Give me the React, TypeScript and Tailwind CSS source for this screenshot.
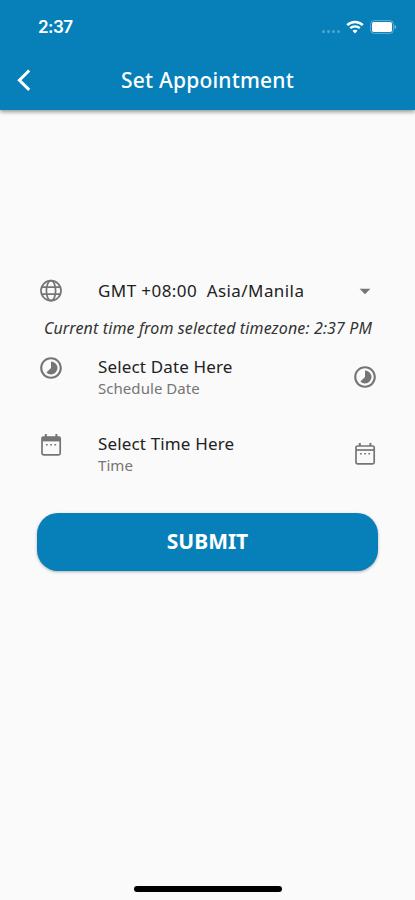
import React from "react";
import { MdArrowDropDown, MdTimelapse } from "react-icons/md";

interface PickerRowProps {
  title: string;
  subtitle: string;
  leading: React.ReactNode;
  trailing: React.ReactNode;
}

const GlobeIcon: React.FC = () => (
  <svg className="mr-[34px]" width="26" height="26" viewBox="0 0 26 26" fill="none" stroke="currentColor" strokeWidth="1.7">
    <circle cx="13" cy="12.7" r="10" />
    <ellipse cx="13" cy="12.7" rx="4.6" ry="10" />
    <path d="M3.8 9.2H22.2M3.8 16.2H22.2" />
  </svg>
);

const CalendarIcon: React.FC<{ filled?: boolean }> = ({ filled }) => (
  <svg width="26" height="26" viewBox="0 0 26 26" fill="none" stroke="currentColor" strokeWidth="1.7">
    <rect x="4" y="5" width="18.2" height="17.8" rx="1.6" />
    <path d="M7.8 2V5M18.4 2V5" strokeWidth="2" />
    {filled ? (
      <path d="M4 4.8H22.2V9.4H4Z" fill="currentColor" stroke="none" />
    ) : (
      <path d="M4 9H22.2" />
    )}
    <path d="M8 12.7H9.7M12.2 12.7H13.9M16.4 12.7H18.1" strokeWidth="1.6" />
  </svg>
);

const StatusBar: React.FC = () => (
  <div className="flex h-[54px] items-center justify-between pl-[38px] pr-[18px]">
    <span className="font-['Inter',sans-serif] text-[17px] font-semibold leading-none tracking-[-0.5px]">
      2:37
    </span>
    <div className="flex items-center">
      {/* No cellular signal */}
      <div className="mr-[6px] mt-2 flex gap-[2px]">
        <span className="size-[3px] rounded-full bg-white/30" />
        <span className="size-[3px] rounded-full bg-white/30" />
        <span className="size-[3px] rounded-full bg-white/30" />
        <span className="size-[3px] rounded-full bg-white/30" />
      </div>
      <svg width="18" height="14" viewBox="0 0 18 14" fill="none" stroke="white">
        <path d="M1.2 5.2C5.5 0.9 12.5 0.9 16.8 5.2" strokeWidth="2.6" />
        <path d="M4.2 8.2C6.9 5.7 11.1 5.7 13.8 8.2" strokeWidth="2.3" />
        <path d="M9 13.4L6.5 10.7C7.9 9.4 10.1 9.4 11.5 10.7Z" fill="white" stroke="none" />
      </svg>
      <svg className="ml-[6px]" width="27" height="14" viewBox="0 0 27 14">
        <rect x="0.6" y="0.6" width="22.8" height="12.8" rx="3.6" fill="none" stroke="white" strokeOpacity="0.35" />
        <rect x="2" y="2" width="20" height="10" rx="1.8" fill="white" />
        <path d="M24.6 4.8C26.6 5.6 26.6 8.4 24.6 9.2Z" fill="white" fillOpacity="0.5" />
      </svg>
    </div>
  </div>
);

const AppBar: React.FC = () => (
  <header className="h-[110px] bg-[#0780b9] text-white shadow-[0_2px_4px_rgba(0,0,0,0.4)]">
    <StatusBar />
    <div className="grid h-[52px] grid-cols-[60px_1fr_60px] items-center">
      <svg className="ml-4" width="16" height="24" viewBox="0 0 16 24" fill="none" stroke="white" strokeWidth="3">
        <path d="M13.2 2.5L3.4 12.2L13.2 21.9" />
      </svg>
      <h1 className="text-center text-[21px] font-medium leading-none tracking-[0.2px]">
        Set Appointment
      </h1>
    </div>
  </header>
);

const PickerRow: React.FC<PickerRowProps> = ({ title, subtitle, leading, trailing }) => (
  <div className="flex h-[77px] pl-[38px] pr-[37px] text-[#757575]">
    <div className="w-[60px] pt-[14px]">{leading}</div>
    <div className="flex-1 pt-[14px]">
      <p className="text-[17px] leading-[24px] tracking-[0.15px] text-[#222]">{title}</p>
      <p className="text-[15px] leading-[18px] tracking-[0.05px]">{subtitle}</p>
    </div>
    <div className="pt-[23px]">{trailing}</div>
  </div>
);

export default function App() {
  return (
    <div className="flex h-[900px] w-[415px] flex-col overflow-hidden bg-[#fafafa] font-['Noto_Sans',sans-serif]">
      <AppBar />

      <main className="flex flex-1 flex-col pt-[160px]">
        <div className="flex h-[41px] items-center pl-[38px] pr-[37px] text-[#757575]">
          <GlobeIcon />
          <span className="flex-1 whitespace-pre text-[17px] leading-none tracking-[0.42px] text-[#222]">
            GMT +08:00  Asia/Manila
          </span>
          <MdArrowDropDown className="size-[26px]" />
        </div>

        <p className="h-[30px] whitespace-nowrap pl-px pt-[5px] text-center text-[16px] italic leading-[24px] tracking-[0.12px] text-[#333]">
          Current time from selected timezone: 2:37 PM
        </p>

        <PickerRow
          title="Select Date Here"
          subtitle="Schedule Date"
          leading={<MdTimelapse className="size-[26px]" />}
          trailing={<MdTimelapse className="size-[26px]" />}
        />
        <PickerRow
          title="Select Time Here"
          subtitle="Time"
          leading={<CalendarIcon filled />}
          trailing={<CalendarIcon />}
        />

        <button className="mx-[37px] mt-[18px] h-[58px] rounded-[21px] bg-[#0780b9] pb-[2px] text-[21px] font-bold leading-none text-white shadow-[0_1px_3px_rgba(0,0,0,0.3)]">
          SUBMIT
        </button>
      </main>

      {/* Home indicator */}
      <div className="mx-auto mb-2 h-[6px] w-[148px] rounded-full bg-black" />
    </div>
  );
}
